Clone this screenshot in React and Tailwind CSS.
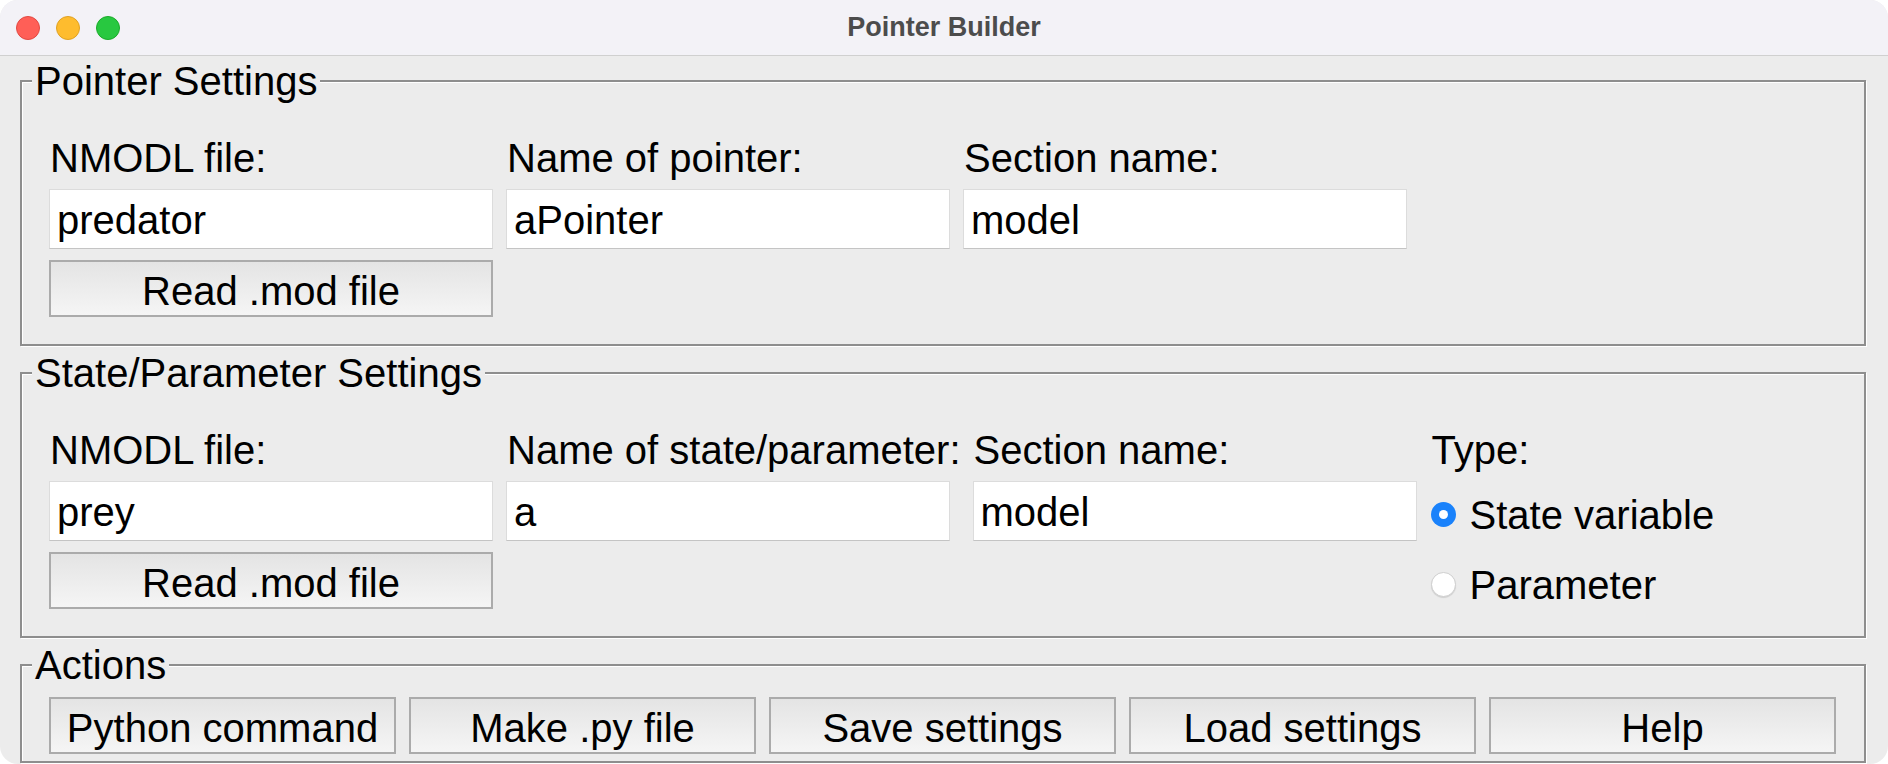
import React from 'react';

const font = { fontFamily: '"Liberation Sans", Arial, sans-serif' };

const TrafficLights = () => (
  <div className="flex items-center gap-[16px] pl-[16px]">
    <span className="w-[24px] h-[24px] rounded-full bg-[#ff5f57] border border-[#e14942]"></span>
    <span className="w-[24px] h-[24px] rounded-full bg-[#febc2e] border border-[#dfa123]"></span>
    <span className="w-[24px] h-[24px] rounded-full bg-[#28c840] border border-[#1aab29]"></span>
  </div>
);

// etched group box like a Swing TitledBorder
const Group = ({ title, children, className = '' }) => (
  <fieldset className={`border-2 border-[#8e8e8e] shadow-[inset_1px_1px_0_#ffffff,1px_1px_0_#ffffff] ${className}`}>
    <legend className="ml-[10px] px-[3px] bg-[#ececec] text-[40px] leading-[46px] text-black">{title}</legend>
    {children}
  </fieldset>
);

const Label = ({ children }) => (
  <div className="h-[46px] text-[40px] leading-[46px] text-black whitespace-nowrap pl-[1px]">{children}</div>
);

const Field = ({ value }) => (
  <div className="w-[444px] h-[60px] bg-white border border-[#dcdcdc] border-b-[#c4c4c4] pl-[7px] pt-[2px] flex items-center text-[40px] text-black">
    {value}
  </div>
);

const Button = ({ children, className = '' }) => (
  <button className={`h-[57px] pt-[4px] border-2 border-[#ababab] bg-gradient-to-b from-[#e4e4e4] to-[#f5f5f5] text-[40px] leading-none text-black flex items-center justify-center ${className}`}>
    {children}
  </button>
);

const Radio = ({ checked, label }) => (
  <div className="h-[50px] flex items-center gap-[14px]">
    {checked ? (
      <span className="w-[25px] h-[25px] rounded-full bg-[#1a82fb] flex items-center justify-center">
        <span className="w-[9px] h-[9px] rounded-full bg-white"></span>
      </span>
    ) : (
      <span className="w-[25px] h-[25px] rounded-full bg-white border border-[#cfcfcf] shadow-[0_1px_1px_rgba(0,0,0,0.12)]"></span>
    )}
    <span className="text-[40px] text-black leading-none pt-[2px]">{label}</span>
  </div>
);

export default function App() {
  return (
    <div className="w-[1888px] h-[764px] bg-white" style={font}>
      <div className="w-full h-full rounded-[18px] overflow-hidden bg-[#ececec] flex flex-col">
        {/* title bar */}
        <div className="relative h-[56px] bg-[#f3f2f7] border-b border-[#d0d0d0] flex items-center">
          <TrafficLights />
          <div className="absolute inset-0 flex items-center justify-center text-[27px] font-bold text-[#4c4c4c]">
            Pointer Builder
          </div>
        </div>

        <div className="flex flex-col gap-[4px] pt-[2px] pl-[20px] pr-[22px]">
          <Group title="Pointer Settings">
            <div className="flex gap-[13px] pt-[31px] pl-[27px] pr-[28px] pb-[27px]">
              <div className="flex flex-col min-w-[444px]">
                <Label>NMODL file:</Label>
                <div className="mt-[8px]"><Field value="predator" /></div>
                <Button className="mt-[11px] w-[444px]">Read .mod file</Button>
              </div>
              <div className="flex flex-col min-w-[444px]">
                <Label>Name of pointer:</Label>
                <div className="mt-[8px]"><Field value="aPointer" /></div>
              </div>
              <div className="flex flex-col min-w-[444px]">
                <Label>Section name:</Label>
                <div className="mt-[8px]"><Field value="model" /></div>
              </div>
            </div>
          </Group>

          <Group title="State/Parameter Settings">
            <div className="flex gap-[12px] pt-[31px] pl-[27px] pr-[28px] pb-[27px]">
              <div className="flex flex-col min-w-[444px]">
                <Label>NMODL file:</Label>
                <div className="mt-[8px]"><Field value="prey" /></div>
                <Button className="mt-[11px] w-[444px]">Read .mod file</Button>
              </div>
              <div className="flex flex-col min-w-[444px] ml-[1px]">
                <Label>Name of state/parameter:</Label>
                <div className="mt-[8px]"><Field value="a" /></div>
              </div>
              <div className="flex flex-col min-w-[444px]">
                <Label>Section name:</Label>
                <div className="mt-[8px]"><Field value="model" /></div>
              </div>
              <div className="flex flex-col pl-[2px]">
                <Label>Type:</Label>
                <div className="mt-[16px]"><Radio checked label="State variable" /></div>
                <div className="mt-[20px]"><Radio label="Parameter" /></div>
              </div>
            </div>
          </Group>

          <Group title="Actions">
            <div className="grid grid-cols-5 gap-[13px] pt-[9px] pl-[27px] pr-[28px] pb-[7px]">
              <Button>Python command</Button>
              <Button>Make .py file</Button>
              <Button>Save settings</Button>
              <Button>Load settings</Button>
              <Button>Help</Button>
            </div>
          </Group>
        </div>
      </div>
    </div>
  );
}
